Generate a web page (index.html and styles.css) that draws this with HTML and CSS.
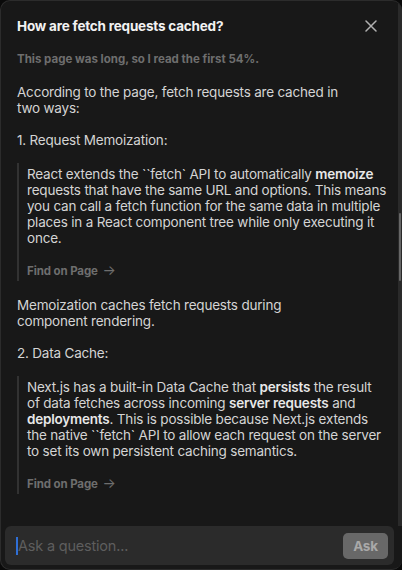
FILE: index.html
```html
<!DOCTYPE html>
<html>
<head>
<meta charset="utf-8">
<link rel="stylesheet" href="styles.css">
</head>
<body>
<div class="panel">
  <div class="main">
    <div class="content">
      <div class="header">
        <h1 class="title">How are fetch requests cached?</h1>
        <svg class="close" width="12" height="12" viewBox="0 0 12 12"><path d="M1 1 L11 11 M11 1 L1 11" stroke="#b0b0b0" stroke-width="1.5" stroke-linecap="round" fill="none"/></svg>
      </div>
      <p class="note">This page was long, so I read the first 54%.</p>
      <p class="para first">According to the page, fetch requests are cached in<br>two ways:</p>
      <p class="para">1. Request Memoization:</p>
      <div class="quote">
        <p class="qtext">React extends the ``fetch` API to automatically <b>memoize</b><br>requests that have the same URL and options. This means<br>you can call a fetch function for the same data in multiple<br>places in a React component tree while only executing it<br>once.</p>
        <div class="find">Find on Page <span class="arrow">→</span></div>
      </div>
      <p class="para">Memoization caches fetch requests during<br>component rendering.</p>
      <p class="para">2. Data Cache:</p>
      <div class="quote">
        <p class="qtext">Next.js has a built-in Data Cache that <b>persists</b> the result<br>of data fetches across incoming <b>server requests</b> and<br><b>deployments</b>. This is possible because Next.js extends<br>the native ``fetch` API to allow each request on the server<br>to set its own persistent caching semantics.</p>
        <div class="find">Find on Page <span class="arrow">→</span></div>
      </div>
    </div>
    <div class="track"><div class="thumb"></div></div>
  </div>
  <div class="footer">
    <div class="inputbar">
      <span class="caret"></span>
      <span class="placeholder">Ask a question...</span>
      <span class="ask">Ask</span>
    </div>
  </div>
</div>
</body>
</html>
```
FILE: styles.css
```css
html, body {
  margin: 0;
  padding: 0;
  background: #0a0a0a;
}
.panel {
  box-sizing: border-box;
  width: 402px;
  height: 570px;
  background: #181818;
  border: 1px solid #2c2c2c;
  border-right: none;
  border-radius: 10px;
  display: flex;
  flex-direction: column;
  overflow: hidden;
  font-family: Inter, "Noto Sans", sans-serif;
  color: #d4d4d4;
  letter-spacing: -0.2px;
}
.main {
  flex: 1;
  display: flex;
  min-height: 0;
}
.content {
  flex: 1;
  min-width: 0;
  padding: 16px 8px 0 16px;
}
.header {
  display: flex;
  align-items: center;
  justify-content: space-between;
  padding-right: 13px;
}
.title {
  margin: 0;
  font-size: 13.5px;
  font-weight: 700;
  color: #f2f2f2;
  line-height: 18px;
}
.close { display: block; }
.note {
  margin: 17px 0 0;
  font-size: 11.5px;
  font-weight: 700;
  color: #6e6e6e;
  line-height: 14px;
  letter-spacing: 0;
}
.para {
  margin: 16px 0 0;
  font-size: 13.5px;
  line-height: 16px;
}
.para.first { margin-top: 18px; }
.quote {
  margin-top: 15px;
  border-left: 2px solid #323232;
  padding: 3px 0 3px 8px;
}
.qtext {
  margin: 0;
  font-size: 13.5px;
  line-height: 16px;
  white-space: nowrap;
}
.qtext b { font-weight: 600; color: #e8e8e8; }
.find {
  margin-top: 17px;
  font-size: 11.5px;
  font-weight: 700;
  color: #6e6e6e;
  line-height: 14px;
  letter-spacing: -0.1px;
}
.arrow { font-weight: 400; font-size: 14px; margin-left: 2px; }
.track {
  width: 4px;
  background: #2a2a2a;
}
.thumb {
  margin-top: 212px;
  margin-left: 1px;
  width: 2px;
  height: 68px;
  background: #666;
  border-radius: 1px;
}
.footer {
  padding: 0 8px 4px 4px;
}
.inputbar {
  height: 39px;
  background: #2b2b2b;
  border-radius: 6px;
  display: flex;
  align-items: center;
  padding: 0 6px 0 11px;
}
.caret {
  width: 2px;
  height: 18px;
  background: #2f6fd6;
}
.placeholder {
  flex: 1;
  font-size: 14.5px;
  color: #5e5e5e;
}
.ask {
  width: 45px;
  height: 26px;
  border-radius: 5px;
  background: #686868;
  color: #a9a9a9;
  font-size: 13.5px;
  font-weight: 700;
  display: flex;
  align-items: center;
  justify-content: center;
}
```
